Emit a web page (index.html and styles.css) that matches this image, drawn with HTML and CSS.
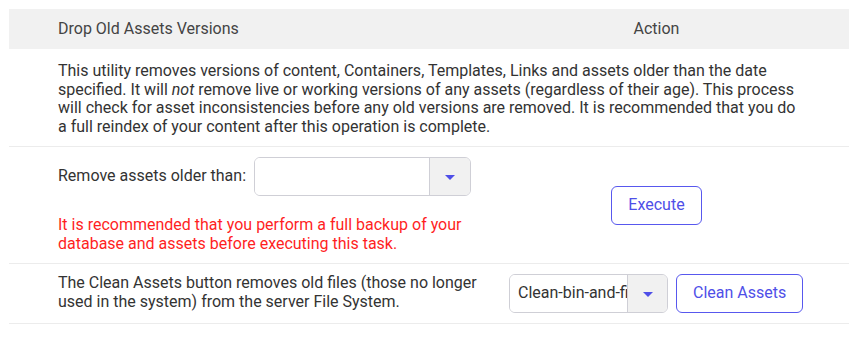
FILE: index.html
```html
<!DOCTYPE html>
<html lang="en">
<head>
    <meta charset="UTF-8">
    <title>Drop Old Assets Versions</title>
    <link rel="stylesheet" href="styles.css">
</head>
<body>
    <div class="panel">
        <div class="row head">
            <div class="cell left">Drop Old Assets Versions</div>
            <div class="cell right">Action</div>
        </div>

        <div class="row">
            <div class="cell full">
                This utility removes versions of content, Containers, Templates, Links and assets older than the date specified. It will <em>not</em> remove live or working versions of any assets (regardless of their age). This process will check for asset inconsistencies before any old versions are removed. It is recommended that you do a full reindex of your content after this operation is complete.
            </div>
        </div>

        <div class="row">
            <div class="cell left">
                <div class="date-line">
                    <span class="label">Remove assets older than:</span>
                    <div class="combo date-combo">
                        <input type="text" class="combo-input">
                        <span class="combo-arrow"></span>
                    </div>
                </div>
                <p class="warning">It is recommended that you perform a full backup of your database and assets before executing this task.</p>
            </div>
            <div class="cell right">
                <button class="btn">Execute</button>
            </div>
        </div>

        <div class="row">
            <div class="cell left wide">
                The Clean Assets button removes old files (those no longer used in the system) from the server File System.
            </div>
            <div class="cell right narrow">
                <div class="combo clean-combo">
                    <input type="text" class="combo-input" value="Clean-bin-and-files">
                    <span class="combo-arrow"></span>
                </div>
                <button class="btn">Clean Assets</button>
            </div>
        </div>
    </div>
</body>
</html>
```

FILE: styles.css
```css
body { margin: 9px; font-family: Roboto, "Liberation Sans", sans-serif; font-size: 16px; line-height: 18.5px; color: #333; background: white; }
.panel { width: 842px; }
.row { display: flex; align-items: center; border-bottom: 1px solid #ececec; }
.row.head { background-color: #f1f1f1; height: 40px; border-bottom: none; color: #444; }
.cell { box-sizing: border-box; }
.left { width: 453px; padding-left: 49px; }
.right { width: 389px; text-align: center; }
.full { width: 842px; padding: 13px 49px 10px 49px; }
.date-line { display: flex; align-items: center; gap: 8px; padding-top: 10px; }
.label { white-space: nowrap; flex-shrink: 0; }
.warning { color: #ff1f1f; margin: 20px 0 10px 0; }
.combo { display: flex; flex-shrink: 0; border: 1px solid #cfcfd6; border-radius: 6px; overflow: hidden; height: 39px; box-sizing: border-box; background: white; }
.combo-input { box-sizing: border-box; border: none; outline: none; font: inherit; color: #333; padding: 0 0 0 8px; min-width: 0; background: white; }
.date-combo { width: 217px; }
.date-combo .combo-input { width: 174px; }
.combo-arrow { flex: 1; background: #f1f1f1; border-left: 1px solid #cfcfd6; position: relative; }
.combo-arrow::after { content: ""; position: absolute; left: 50%; top: 50%; margin-left: -5px; margin-top: -2px; border-left: 5px solid transparent; border-right: 5px solid transparent; border-top: 5px solid #4f4fe8; }
.btn { font: inherit; color: #4f4fe8; background: white; border: 1px solid #5858ee; border-radius: 6px; height: 39px; padding: 0 16px; cursor: pointer; }
.wide { width: 480px; padding: 10px 0 12px 49px; }
.narrow { width: 362px; display: flex; align-items: center; gap: 8px; padding-left: 20px; }
.clean-combo { width: 159px; }
.clean-combo .combo-input { width: 117px; }
```
